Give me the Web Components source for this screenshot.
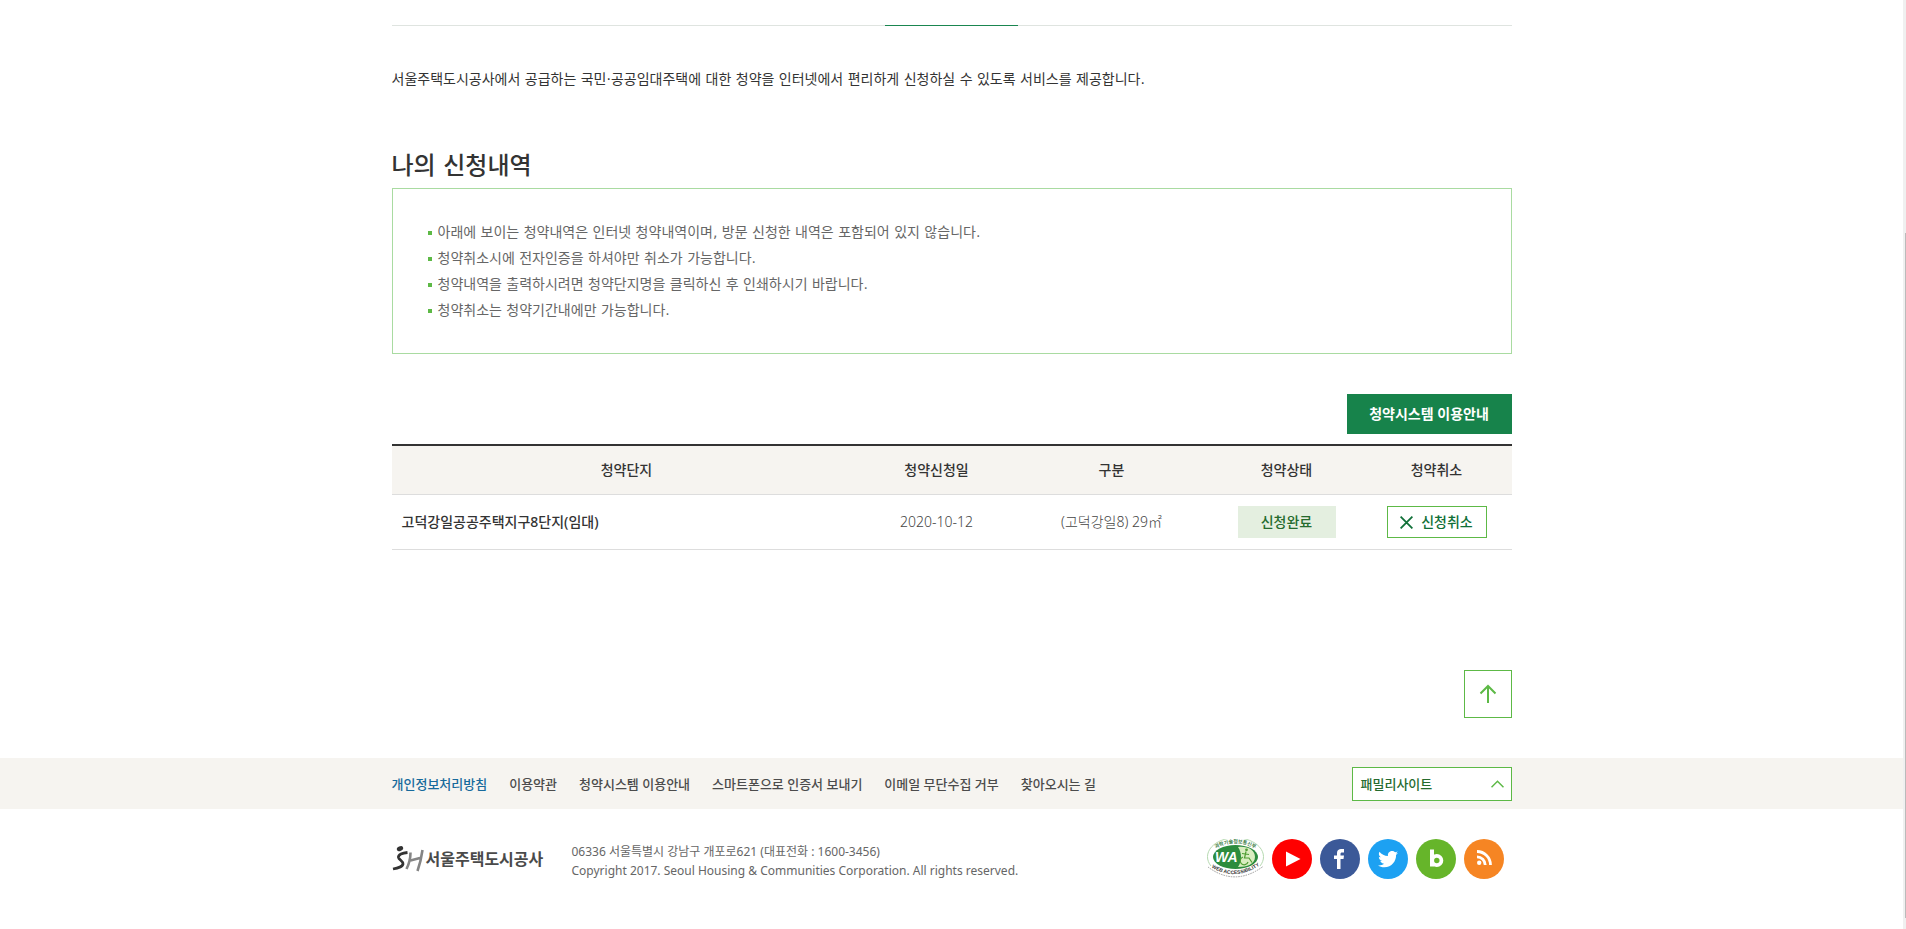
<!DOCTYPE html>
<html lang="ko">
<head>
<meta charset="utf-8">
<title>나의 신청내역</title>
<style>
  body {
    margin: 0;
    background: #fff;
    color: #333;
    font: 14px/20px "Noto Sans", "Noto Sans CJK KR", sans-serif;
    --prose: "DejaVu Sans", "Noto Sans CJK KR", sans-serif;
  }
</style>
</head>
<body>
<app-shell>
  <tab-line></tab-line>
  <intro-text>서울주택도시공사에서 공급하는 국민·공공임대주택에 대한 청약을 인터넷에서 편리하게 신청하실 수 있도록 서비스를 제공합니다.</intro-text>
  <notice-box heading="나의 신청내역">
    <li>아래에 보이는 청약내역은 인터넷 청약내역이며, 방문 신청한 내역은 포함되어 있지 않습니다.</li>
    <li>청약취소시에 전자인증을 하셔야만 취소가 가능합니다.</li>
    <li>청약내역을 출력하시려면 청약단지명을 클릭하신 후 인쇄하시기 바랍니다.</li>
    <li>청약취소는 청약기간내에만 가능합니다.</li>
  </notice-box>
  <apply-list></apply-list>
  <top-button></top-button>
  <footer-menu slot="footer"></footer-menu>
  <footer-info slot="footer"></footer-info>
</app-shell>

<script>
class AppShell extends HTMLElement {
    constructor() {
        super();
        this.attachShadow({ mode: 'open' });
        this.shadowRoot.innerHTML = `
            <style>
              :host {
                  display: grid;
                  grid-template-columns: 1fr 3px;
                  min-height: 100vh;
              }
              main {
                  max-width: 1120px;
                  margin: 0 auto;
                  padding: 25px 0 40px;
              }
              .rail {
                  display: grid;
                  grid-template-rows: 233fr 685fr 11fr;
                  background: #f0f0f0;
              }
              .thumb {
                  grid-row: 2;
                  margin-left: 2px;
                  background: #bbb;
              }
            </style>
            <div>
              <main><slot></slot></main>
              <footer><slot name="footer"></slot></footer>
            </div>
            <div class="rail"><div class="thumb"></div></div>
        `;
    }
}

class TabLine extends HTMLElement {
    constructor() {
        super();
        this.attachShadow({ mode: 'open' });
        this.shadowRoot.innerHTML = `
            <style>
              :host {
                  display: flex;
                  justify-content: center;
                  height: 1px;
                  background: #dfe4e0;
              }
              div {
                  width: 133px;
                  background: #1a8650;
              }
            </style>
            <div></div>
        `;
    }
}

class IntroText extends HTMLElement {
    constructor() {
        super();
        this.attachShadow({ mode: 'open' });
        this.shadowRoot.innerHTML = `
            <style>
              :host { display: block; padding: 43px 0 62px; font-family: var(--prose); }
              p { margin: 0; }
            </style>
            <p><slot></slot></p>
        `;
    }
}

class NoticeBox extends HTMLElement {
    constructor() {
        super();
        this.attachShadow({ mode: 'open' });
        this.shadowRoot.innerHTML = `
            <style>
              :host { display: block; font-family: var(--prose); }
              h2 {
                  margin: 0 0 6px;
                  font-size: 24px;
                  line-height: 31px;
                  font-weight: 500;
              }
              ul {
                  margin: 0;
                  padding: 30px 35px;
                  border: 1px solid #a9dba1;
                  list-style: none;
                  color: #666;
              }
              ::slotted(li) {
                  display: block;
                  padding-left: 10px;
                  line-height: 26px;
                  background: linear-gradient(#5db946, #5db946) 0 12px / 4px 4px no-repeat;
              }
            </style>
            <h2>${this.getAttribute('heading')}</h2>
            <ul><slot></slot></ul>
        `;
    }
}

class ApplyList extends HTMLElement {
    constructor() {
        super();
        this.attachShadow({ mode: 'open' });
        this.rows = [
            { name: '고덕강일공공주택지구8단지(임대)', date: '2020-10-12', type: '(고덕강일8) 29㎡', state: '신청완료' },
        ];
    }

    connectedCallback() {
        this.render();
    }

    render() {
        this.shadowRoot.innerHTML = `
            <style>
              :host { display: block; padding-top: 40px; }
              .bar {
                  display: flex;
                  justify-content: flex-end;
                  margin-bottom: 10px;
              }
              a { color: inherit; text-decoration: none; }
              .guide {
                  width: 165px;
                  line-height: 40px;
                  background: #17834b;
                  color: #fff;
                  font-weight: 700;
                  text-align: center;
              }
              table {
                  width: 100%;
                  table-layout: fixed;
                  border-collapse: separate;
                  border-spacing: 0;
                  border-top: 2px solid #333;
              }
              th, td {
                  box-sizing: border-box;
                  padding: 0;
                  border-bottom: 1px solid #ddd;
                  text-align: center;
              }
              th { height: 49px; background: #f6f4f0; font-weight: 500; }
              td { height: 55px; color: #444; font-weight: 300; }
              .name { padding-left: 10px; color: #333; font-weight: 500; text-align: left; }
              .state {
                  display: inline-block;
                  width: 98px;
                  line-height: 32px;
                  background: #e4efe0;
                  color: #256b2e;
                  font-weight: 500;
                  vertical-align: middle;
              }
              button {
                  display: inline-flex;
                  align-items: center;
                  justify-content: center;
                  gap: 8px;
                  width: 100px;
                  height: 32px;
                  padding: 0;
                  border: 1px solid #5db946;
                  background: #fff;
                  color: #107038;
                  font: inherit;
                  font-weight: 500;
                  vertical-align: middle;
              }
            </style>
            <div class="bar"><a class="guide" href="#">청약시스템 이용안내</a></div>
            <table>
              <colgroup>
                <col><col style="width: 150px"><col style="width: 200px"><col style="width: 150px"><col style="width: 150px">
              </colgroup>
              <thead>
                <tr><th>청약단지</th><th>청약신청일</th><th>구분</th><th>청약상태</th><th>청약취소</th></tr>
              </thead>
              <tbody>
                ${this.rows.map(row => `
                    <tr>
                      <td class="name"><a href="#">${row.name}</a></td>
                      <td>${row.date}</td>
                      <td>${row.type}</td>
                      <td><span class="state">${row.state}</span></td>
                      <td>
                        <button type="button">
                          <svg width="13" height="13" viewBox="0 0 13 13" fill="none" stroke="#107038" stroke-width="1.8"><path d="M.6.6l11.8 11.8M12.4.6L.6 12.4"/></svg>
                          신청취소
                        </button>
                      </td>
                    </tr>
                `).join('')}
              </tbody>
            </table>
        `;
    }
}

class TopButton extends HTMLElement {
    constructor() {
        super();
        this.attachShadow({ mode: 'open' });
        this.shadowRoot.innerHTML = `
            <style>
              :host { display: flex; justify-content: flex-end; padding-top: 120px; }
              button {
                  display: grid;
                  place-items: center;
                  width: 48px;
                  height: 48px;
                  padding: 0;
                  border: 1px solid #5db946;
                  background: #fff;
              }
            </style>
            <button type="button" aria-label="맨 위로">
              <svg width="18" height="20" viewBox="0 0 18 20" fill="none" stroke="#5db946" stroke-width="2"><path d="M9 19V2M1.500 9.500L9 2l7.500 7.500"/></svg>
            </button>
        `;
        this.shadowRoot.querySelector('button').addEventListener('click', () => window.scrollTo(0, 0));
    }
}

class FooterMenu extends HTMLElement {
    constructor() {
        super();
        this.attachShadow({ mode: 'open' });
        const links = ['개인정보처리방침', '이용약관', '청약시스템 이용안내', '스마트폰으로 인증서 보내기', '이메일 무단수집 거부', '찾아오시는 길'];
        this.shadowRoot.innerHTML = `
            <style>
              :host { display: block; background: #f6f4f0; font-size: 13px; font-weight: 500; }
              .inner {
                  display: flex;
                  align-items: center;
                  justify-content: space-between;
                  max-width: 1120px;
                  height: 51px;
                  margin: 0 auto;
              }
              nav { display: flex; gap: 22px; }
              a { color: #4c4c4c; text-decoration: none; }
              a:first-child { color: #176a9c; }
              button {
                  display: flex;
                  align-items: center;
                  justify-content: space-between;
                  width: 160px;
                  height: 34px;
                  padding: 0 7px 0 8px;
                  border: 1px solid #5db946;
                  background: #fff;
                  color: #256b2e;
                  font: inherit;
              }
            </style>
            <div class="inner">
              <nav>${links.map(text => `<a href="#">${text}</a>`).join('')}</nav>
              <button type="button">패밀리사이트
                <svg width="13" height="8" viewBox="0 0 13 8" fill="none" stroke="#5db946" stroke-width="1.500"><path d="M.5 7.200l6-6 6 6"/></svg>
              </button>
            </div>
        `;
    }
}

class FooterInfo extends HTMLElement {
    constructor() {
        super();
        this.attachShadow({ mode: 'open' });
        this.shadowRoot.innerHTML = `
            <style>
              :host {
                  display: flex;
                  align-items: center;
                  max-width: 1120px;
                  margin: 0 auto;
                  padding-top: 29px;
              }
              a { text-decoration: none; }
              .logo {
                  display: flex;
                  align-items: center;
                  gap: 2px;
                  width: 180px;
                  color: #4a4a4a;
                  font-size: 16px;
                  font-weight: 700;
              }
              address {
                  flex: 1;
                  padding-top: 4px;
                  color: #666;
                  font-size: 12px;
                  line-height: 19px;
                  font-style: normal;
              }
              .sns { display: flex; gap: 8px; padding-right: 8px; }
              .sns a { height: 40px; }
              svg { display: block; }
            </style>
            <a class="logo" href="#">
              <svg width="32" height="28" viewBox="0 0 32 28" fill="none">
                <ellipse cx="8" cy="3.600" rx="3.300" ry="2.300" transform="rotate(-25 8 3.600)" fill="#333"/>
                <path d="M15.500 7.500C10.500 8 6 9.500 6.500 12.500c.5 2.500 5 3.500 4.500 6.500-.5 3-5 4-10 5" stroke="#333" stroke-width="2.800"/>
                <path d="M18.500 7.500C18.500 13 17 19 14.500 24M30.500 5C29.500 12 28 19 25.500 26M16.500 16l11.500-3" stroke="#858585" stroke-width="2.600"/>
              </svg>
              서울주택도시공사
            </a>
            <address>
              06336 서울특별시 강남구 개포로621 (대표전화 : 1600-3456)<br>
              Copyright 2017. Seoul Housing &amp; Communities Corporation. All rights reserved.
            </address>
            <div class="sns">
              <a href="#" aria-label="웹 접근성 인증">
                <svg width="57" height="40" viewBox="0 0 57 40">
                  <defs>
                    <path id="top" d="M7 10.500Q28.500-2 50 10.500"/>
                    <path id="bottom" d="M4 28Q28.500 43 53 26"/>
                  </defs>
                  <path d="M4 27A28 19 0 1 1 53 27" fill="none" stroke="#b5d9b0"/>
                  <ellipse cx="28.500" cy="18" rx="22.500" ry="12" fill="#2c8c3e"/>
                  <path d="M31 8c10-1 17 3 17 10s-8 10-17 10c4-6 4-14 0-20z" fill="#d9edc0"/>
                  <g fill="none" stroke="#4f9d32" stroke-width="1.200">
                    <path d="M36 18a4 4 0 1 0 5 5"/>
                    <path d="M39 12.500l-1.500 6.500h4.500l3 4.500M35 14.500l7 1"/>
                  </g>
                  <circle cx="39.500" cy="10.800" r="1.400" fill="#4f9d32"/>
                  <text x="8" y="23" fill="#fff" font-family="Liberation Sans, sans-serif" font-size="14" font-weight="700" font-style="italic">WA</text>
                  <text fill="#3c7e46" font-size="5" font-weight="700"><textPath href="#top" startOffset="50%" text-anchor="middle">과학기술정보통신부</textPath></text>
                  <text fill="#333" font-family="Liberation Sans, sans-serif" font-size="5" font-weight="700"><textPath href="#bottom" startOffset="50%" text-anchor="middle">WEB ACCESSIBILITY</textPath></text>
                  <path d="M1 28Q28 48 56 27.500" fill="none" stroke="#999" stroke-dasharray="1.500 1"/>
                </svg>
              </a>
              <a href="#" aria-label="유튜브">
                <svg width="40" height="40" viewBox="0 0 40 40"><circle cx="20" cy="20" r="20" fill="#f00"/><path d="M14 12.500v15L28.500 20z" fill="#fff"/></svg>
              </a>
              <a href="#" aria-label="페이스북">
                <svg width="40" height="40" viewBox="0 0 40 40"><circle cx="20" cy="20" r="20" fill="#3b5998"/><path d="M17 30V20h-3v-3.500h3V14c0-3 2-4 4-4h3v3.500h-2c-1 0-1.500.5-1.500 1.500v1.500H24l-.5 3.500h-3v10z" fill="#fff"/></svg>
              </a>
              <a href="#" aria-label="트위터">
                <svg width="40" height="40" viewBox="0 0 40 40"><circle cx="20" cy="20" r="20" fill="#1da1f2"/><path transform="translate(10 10) scale(.84)" d="M24 4.600c-.9.400-1.800.7-2.800.8 1-.6 1.800-1.600 2.200-2.700-1 .6-2 1-3.100 1.200-.9-1-2.200-1.600-3.600-1.600-3.200 0-5.500 3-4.800 6C7.800 8.100 4.100 6.100 1.700 3.200.4 5.400 1 8.300 3.200 9.700c-.8 0-1.600-.2-2.200-.6-.1 2.300 1.600 4.400 3.900 4.900-.7.200-1.500.2-2.200.1.600 2 2.400 3.400 4.600 3.400C5.200 19.100 2.600 19.800 0 19.500c2.200 1.400 4.800 2.200 7.500 2.200 9.100 0 14.300-7.700 14-14.600 1-.7 1.800-1.600 2.500-2.500z" fill="#fff"/></svg>
              </a>
              <a href="#" aria-label="블로그">
                <svg width="40" height="40" viewBox="0 0 40 40"><circle cx="20" cy="20" r="20" fill="#66b52a"/><path d="M16 10.500v17" stroke="#fff" stroke-width="4"/><circle cx="20.800" cy="21.500" r="4.600" fill="none" stroke="#fff" stroke-width="3.800"/></svg>
              </a>
              <a href="#" aria-label="RSS">
                <svg width="40" height="40" viewBox="0 0 40 40"><circle cx="20" cy="20" r="20" fill="#f68523"/><circle cx="15.200" cy="23.800" r="2.200" fill="#fff"/><path d="M13 17.800a8.200 8.200 0 0 1 8.200 8.200M13 12.500A13.500 13.500 0 0 1 26.500 26" fill="none" stroke="#fff" stroke-width="2.800"/></svg>
              </a>
            </div>
        `;
    }
}

customElements.define('app-shell', AppShell);
customElements.define('tab-line', TabLine);
customElements.define('intro-text', IntroText);
customElements.define('notice-box', NoticeBox);
customElements.define('apply-list', ApplyList);
customElements.define('top-button', TopButton);
customElements.define('footer-menu', FooterMenu);
customElements.define('footer-info', FooterInfo);
</script>
</body>
</html>
